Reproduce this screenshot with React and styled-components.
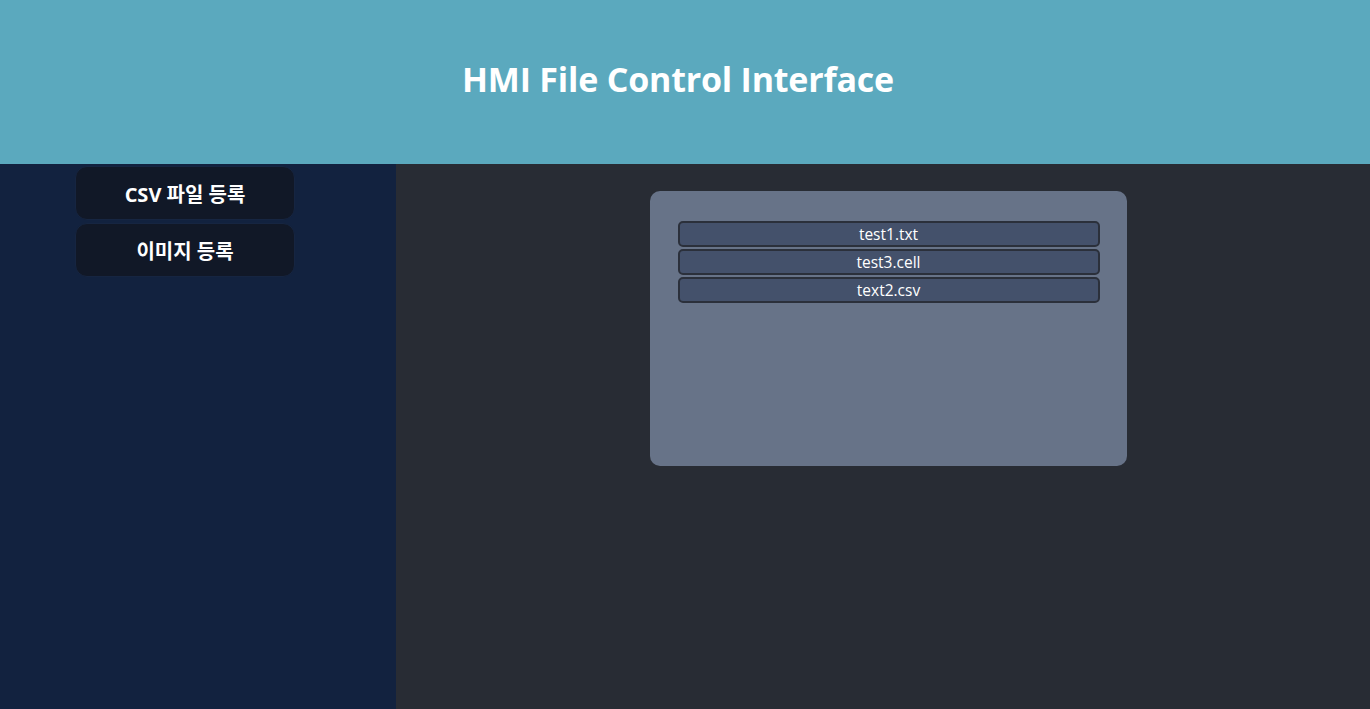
import React from 'react'
import styled, { createGlobalStyle } from 'styled-components'

const GlobalStyle = createGlobalStyle`
  html, body {
    margin: 0;
    padding: 0;
    height: 100%;
  }
  body {
    font-family: "Open Sans", "Noto Sans", "Noto Sans CJK KR", sans-serif;
    background: #282c34;
    overflow: hidden;
  }
`

const Page = styled.div`
  display: flex;
  flex-direction: column;
  width: 100%;
  height: 100vh;
`

const Header = styled.header`
  height: 164px;
  flex-shrink: 0;
  background: #5ba9be;
  display: flex;
  align-items: center;
  justify-content: center;
`

const Title = styled.h1`
  margin: 0 0 6px -14px;
  color: #ffffff;
  font-size: 34px;
  font-weight: 700;
  letter-spacing: -0.2px;
`

const Body = styled.div`
  flex: 1;
  display: flex;
`

const Sidebar = styled.aside`
  width: 396px;
  flex-shrink: 0;
  background: #12223f;
  display: flex;
  flex-direction: column;
  gap: 3px;
  padding: 2px 0 0 75px;
  box-sizing: border-box;
`

const NavButton = styled.button`
  width: 220px;
  height: 54px;
  padding: 0;
  background: #111827;
  border: 1px solid #162541;
  border-radius: 12px;
  color: #ffffff;
  font-family: "Open Sans", "Noto Sans", "Noto Sans CJK KR", sans-serif;
  font-size: 20px;
  font-weight: 700;
  cursor: pointer;
`

const Main = styled.main`
  flex: 1;
  display: flex;
  justify-content: center;
  align-items: flex-start;
  padding-top: 27px;
  padding-left: 10px;
`

const Card = styled.div`
  width: 477px;
  height: 275px;
  box-sizing: border-box;
  background: #677388;
  border-radius: 10px;
  padding: 30px 27px 0 28px;
  display: flex;
  flex-direction: column;
  gap: 2px;
`

const FileItem = styled.div`
  height: 26px;
  box-sizing: border-box;
  background: #44516b;
  border: 2px solid #2b303b;
  border-radius: 5px;
  color: #ffffff;
  font-size: 15.5px;
  display: flex;
  align-items: center;
  justify-content: center;
`

const files = ['test1.txt', 'test3.cell', 'text2.csv']

export default function App() {
  return (
    <>
      <GlobalStyle />
      <Page>
        <Header>
          <Title>HMI File Control Interface</Title>
        </Header>
        <Body>
          <Sidebar>
            <NavButton>CSV 파일 등록</NavButton>
            <NavButton>이미지 등록</NavButton>
          </Sidebar>
          <Main>
            <Card>
              {files.map((f) => (
                <FileItem key={f}>{f}</FileItem>
              ))}
            </Card>
          </Main>
        </Body>
      </Page>
    </>
  )
}
